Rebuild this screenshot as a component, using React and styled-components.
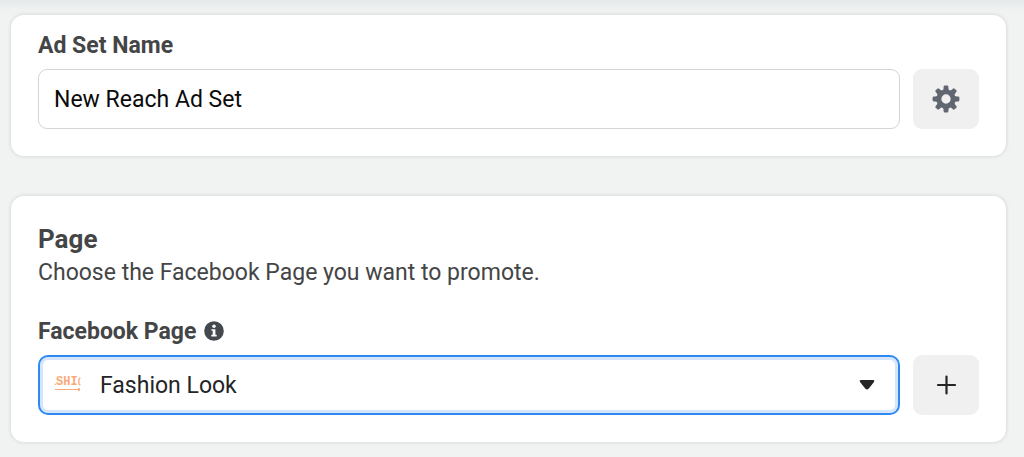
import React, { useState } from "react";
import styled, { createGlobalStyle } from "styled-components";

const GlobalStyle = createGlobalStyle`
  *, *::before, *::after { box-sizing: border-box; }
  body {
    margin: 0;
    background: #f1f3f3;
    color: #444546;
    font-family: Roboto, "Liberation Sans", sans-serif;
    font-size: 23px;
    line-height: 28px;
  }
`;

const Page = styled.main`
  display: flex;
  flex-direction: column;
  gap: 40px;
  padding: 15px 18px 15px 11px;
  background: linear-gradient(#e6e9e9, #eff1f1 8px, #f1f3f3 16px) top / 100% 16px no-repeat;
`;

const Card = styled.section`
  padding: ${({ $roomy }) => ($roomy ? "27px" : "17px")} 27px 27px;
  background: #fff;
  border-radius: 13px;
  box-shadow: 0 0 4px rgba(0, 0, 0, 0.14);
`;

const Title = styled.h2`
  margin: 0 0 2px;
  font-size: 26px;
  font-weight: 700;
  line-height: 32px;
`;

const Description = styled.p`
  margin: 0 0 29px;
  line-height: 32px;
`;

const LabelRow = styled.div`
  display: flex;
  align-items: center;
  gap: 8px;
  margin-bottom: 9px;
`;

const Label = styled.label`
  font-weight: 700;
`;

const InfoButton = styled.button`
  display: flex;
  padding: 0 0 2px;
  border: 0;
  background: none;
  cursor: pointer;
`;

const ControlRow = styled.div`
  display: flex;
  gap: 13px;
`;

const TextInput = styled.input`
  flex: 1;
  min-width: 0;
  height: 60px;
  padding: 0 15px;
  border: 1px solid #d3d4d5;
  border-radius: 9px;
  background: #fff;
  color: #0b0b0c;
  font: inherit;
  outline: none;
`;

const SelectField = styled.div`
  position: relative;
  display: flex;
  flex: 1;
  min-width: 0;
`;

const Select = styled.select`
  width: 100%;
  height: 60px;
  padding: 2px 56px 0 60px;
  appearance: none;
  border: 2px solid #2e89f2;
  border-radius: 10px;
  background: #fff;
  box-shadow: inset 0 0 0 3px #d5e5fb;
  color: #242526;
  font: inherit;
  outline: none;
`;

const BrandThumb = styled.svg`
  position: absolute;
  top: 16px;
  left: 16px;
  pointer-events: none;

  text {
    font: 700 12px "Liberation Mono", monospace;
  }
`;

const Caret = styled.svg`
  position: absolute;
  top: 24px;
  right: 25px;
  pointer-events: none;
`;

const IconButton = styled.button`
  display: flex;
  align-items: center;
  justify-content: center;
  width: 66px;
  height: 60px;
  padding: 0;
  border: 0;
  border-radius: 9px;
  background: #f0f0f0;
  cursor: pointer;
`;

const TEETH = [0, 45, 90, 135, 180, 225, 270, 315];

function GearIcon() {
  return (
    <svg width="28" height="28" viewBox="-14 -14 28 28" aria-hidden="true">
      <circle r="7.1" fill="none" stroke="#606770" strokeWidth="4.9" />
      {TEETH.map((angle) => (
        <path
          key={angle}
          d="M-3.4-8.4Q-2.4-9.4-2.4-11V-12.2Q-2.3-13.4-1.2-13.4H1.2Q2.3-13.4 2.4-12.2V-11Q2.4-9.4 3.4-8.4Z"
          fill="#606770"
          transform={`rotate(${angle})`}
        />
      ))}
    </svg>
  );
}

function InfoIcon() {
  return (
    <svg width="20" height="20" viewBox="0 0 20 20" aria-hidden="true">
      <circle cx="10" cy="10" r="9.8" fill="#444950" />
      <circle cx="10" cy="5.3" r="1.7" fill="#fff" />
      <path d="M7.4 8.2h4v5.6h1.3v1.6H7.3v-1.6h1.4V9.8H7.4z" fill="#fff" />
    </svg>
  );
}

function PlusIcon() {
  return (
    <svg width="20" height="20" viewBox="0 0 20 20" aria-hidden="true">
      <path d="M10.5 1.5v17M2 10h17" stroke="#242526" strokeWidth="2.2" strokeLinecap="round" />
    </svg>
  );
}

function BrandLogo() {
  return (
    <BrandThumb width="28" height="28" viewBox="0 0 28 28" fill="#f9a877" aria-hidden="true">
      <rect x="0.6" y="12.6" width="1.2" height="1.4" />
      <text x="2" y="14">SHI</text>
      <path d="M26.4 6.8Q24.8 7.2 24.8 9.2V11.4Q24.8 13.4 26.4 13.8" fill="none" stroke="#f9a877" strokeWidth="1.3" />
      <rect x="1" y="18" width="25" height="1" />
      <rect x="24" y="17" width="1.6" height="3" />
    </BrandThumb>
  );
}

export default function App() {
  const [name, setName] = useState("New Reach Ad Set");

  return (
    <>
      <GlobalStyle />
      <Page>
        <Card>
          <LabelRow>
            <Label htmlFor="ad-set-name">Ad Set Name</Label>
          </LabelRow>
          <ControlRow>
            <TextInput
              id="ad-set-name"
              type="text"
              value={name}
              onChange={(event) => setName(event.target.value)}
            />
            <IconButton type="button" aria-label="Name settings">
              <GearIcon />
            </IconButton>
          </ControlRow>
        </Card>

        <Card $roomy>
          <Title>Page</Title>
          <Description>Choose the Facebook Page you want to promote.</Description>
          <LabelRow>
            <Label htmlFor="facebook-page">Facebook Page</Label>
            <InfoButton type="button" aria-label="About Facebook Page">
              <InfoIcon />
            </InfoButton>
          </LabelRow>
          <ControlRow>
            <SelectField>
              <Select id="facebook-page" defaultValue="fashion-look">
                <option value="fashion-look">Fashion Look</option>
              </Select>
              <BrandLogo />
              <Caret width="16" height="12" viewBox="0 0 16 12" aria-hidden="true">
                <path
                  d="M1.8 1H14.2Q16 1.2 15 3L9.6 9.8Q8 11.4 6.4 9.8L1 3Q0 1.2 1.8 1Z"
                  fill="#242526"
                />
              </Caret>
            </SelectField>
            <IconButton type="button" aria-label="Add page">
              <PlusIcon />
            </IconButton>
          </ControlRow>
        </Card>
      </Page>
    </>
  );
}
